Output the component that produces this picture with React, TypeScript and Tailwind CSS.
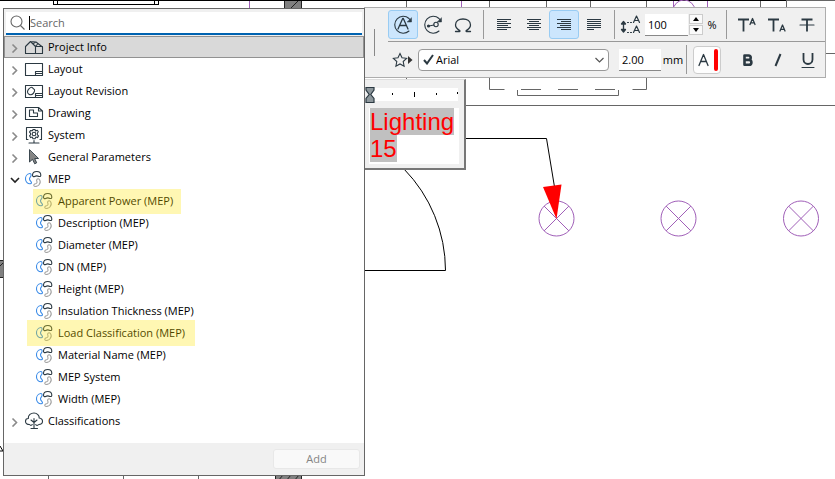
import React from "react";

const INK = "#2b3942";

type IconProps = { className?: string };

function Svg({ w, h, children, className = "" }: { w: number; h: number; children: React.ReactNode; className?: string }) {
  return (
    <svg
      width={w}
      height={h}
      viewBox={`0 0 ${w} ${h}`}
      fill="none"
      stroke={INK}
      strokeWidth="1.1"
      strokeLinecap="round"
      strokeLinejoin="round"
      aria-hidden="true"
      className={`shrink-0 ${className}`}
    >
      {children}
    </svg>
  );
}

/* ---------- Tree icons ---------- */

const HouseIcon = () => (
  <Svg w={20} h={18}>
    <path d="M1.5 15.5V8.5L6.500 3.500l5 5v7zM6.500 3.500L12 4l6.500 5v6.500h-7M11.500 8.500h7M8.800 5.700L12 4M11.500 8.500l2.500-3" />
  </Svg>
);
const LayoutIcon = () => (
  <Svg w={20} h={18}>
    <path d="M1.500 3.500h17v12h-17zM11.500 15.500v-4h7M11.500 13.500h7" />
  </Svg>
);
const RevisionIcon = () => (
  <Svg w={20} h={18}>
    <path d="M1.500 3.500h17v12h-17zM11.500 15.500v-4h7M11.500 13.500h7" />
    <path d="M7.500 5.200c1 0 1 1 2 1.500s1.500 1 1 2.500-2 3.500-3.500 3.500-3.500-1-3.500-3 3-4.500 4-4.500z" />
  </Svg>
);
const DrawingIcon = () => (
  <Svg w={20} h={18}>
    <path d="M1.500 3.500h13l4 3.500v8.500h-17zM14.500 3.500V7h4" />
    <path d="M5.500 6h4v3h4v3.500h-8z" />
  </Svg>
);
const SystemIcon = () => (
  <Svg w={20} h={18}>
    <path d="M4 13.500H2.500v-12h15v12H16M5 17h10M10 14.500V17" />
    <circle cx="10" cy="8" r="1.800" />
    <path d="M9 3.500h2l.5 1.500 1.800-.7 1 1.500-1 1.400.1 1.600 1.200 1-1.100 1.800-1.600-.5-.9 1.700H9l-.7-1.700-1.600.5-1.200-1.800 1.200-1.200-.2-1.500-1-1 1-1.500 2 .2z" />
  </Svg>
);
const PointerIcon = () => (
  <Svg w={20} h={18}>
    <path d="M5.500 2v12l3-2.700 2.200 4.500 2-1-2-4.300h3.500z" fill="#858585" strokeWidth="0.900" />
  </Svg>
);
const MepIcon = () => (
  <Svg w={20} h={18}>
    <path
      d="M5.800 3.500C3 3.800 1.300 6.500 1.500 9.300c.2 2.700 2.300 4.700 4.700 4.500 1.300-.1 1.700-1.200.8-2.100C6 10.700 5.300 9.800 5.500 8.500c.2-1.200 1.500-1.800 1.600-3.200.1-1.100-.4-1.900-1.300-1.800z"
      stroke="#3a8be8"
    />
    <path d="M8.500 5.300C8.500 3 10.300 1.500 12.800 1.500s4 1.600 4 3.800c0 1.200-.9 1.500-1.900 1.100-1.400-.7-2.900-.7-4.300 0-1 .5-2.100.1-2.100-1.100z" />
    <path
      d="M13.300 9c-1 .7-.9 1.600-.4 2.500.5 1.200-.3 2-1.400 2.300-1.400.3-2 1-1.600 1.900.6 1.200 3.600.9 5-.7 1.300-1.500 1.600-3.800.7-5.200-.6-.9-1.500-1.300-2.300-.8z"
      stroke="#a3a3a3"
    />
  </Svg>
);
const TreeIcon = () => (
  <Svg w={20} h={18}>
    <path d="M5.500 12.500c-2.200 0-4-1-4-3.200C1.500 7.500 3 6.500 4.300 6.500 4 3 7 1 10 1s5.500 2.500 5.200 5c2 .3 3.300 1.500 3.300 3.300 0 2-1.600 3.200-3.700 3.200-.8.900-2.300.9-3.100.2M5.500 12.500c.8.900 2 .9 2.800.2" />
    <path d="M10 16V6.500M7 8l3 2.500M13 8l-3 2.500M7 16.500h6.500" />
  </Svg>
);

/* ---------- Tree ---------- */

function Chevron({ open }: { open?: boolean }) {
  return (
    <svg width="10" height="10" viewBox="0 0 10 10" fill="none" strokeWidth="1.600" aria-hidden="true" className="mt-0.5 shrink-0">
      {open ? <path d="M1 3l4 4 4-4" stroke="#222" /> : <path d="M2.500 1.500L6.500 5.500l-4 4" stroke="#8a8a8a" />}
    </svg>
  );
}

const groups: { label: string; Icon: React.FC; open?: boolean; selected?: boolean; items?: { label: string; marked?: "inner" | "outer" }[] }[] = [
  { label: "Project Info", Icon: HouseIcon, selected: true },
  { label: "Layout", Icon: LayoutIcon },
  { label: "Layout Revision", Icon: RevisionIcon },
  { label: "Drawing", Icon: DrawingIcon },
  { label: "System", Icon: SystemIcon },
  { label: "General Parameters", Icon: PointerIcon },
  {
    label: "MEP",
    Icon: MepIcon,
    open: true,
    items: [
      { label: "Apparent Power (MEP)", marked: "inner" },
      { label: "Description (MEP)" },
      { label: "Diameter (MEP)" },
      { label: "DN (MEP)" },
      { label: "Height (MEP)" },
      { label: "Insulation Thickness (MEP)" },
      { label: "Load Classification (MEP)", marked: "outer" },
      { label: "Material Name (MEP)" },
      { label: "MEP System" },
      { label: "Width (MEP)" },
    ],
  },
  { label: "Classifications", Icon: TreeIcon },
];

function ParameterPicker() {
  return (
    <section className="absolute left-[3px] top-2 flex w-[362px] flex-col border border-[#666] bg-[#f0f0f0]">
      <div className="mx-0.5 mt-[3px] flex h-[23px] items-center gap-1 border-b-2 border-[#0063b1] bg-white pl-1">
        <svg width="15" height="16" viewBox="0 0 15 16" fill="none" stroke="#666" strokeWidth="1.100" aria-hidden="true">
          <circle cx="6.500" cy="6.500" r="5.500" />
          <path d="M10.500 10.500l4 4" />
        </svg>
        <span className="flex flex-1 items-center">
          <span className="h-3.5 w-px bg-black" />
          <input type="text" aria-label="Search" placeholder="Search" className="min-w-0 flex-1 bg-transparent outline-none placeholder:text-[#666]" />
        </span>
      </div>
      <ul role="tree" className="mt-px bg-white pb-[11px]">
        {groups.map(({ label, Icon, open, selected, items }) => (
          <li key={label} role="treeitem" aria-expanded={!!open} aria-selected={!!selected}>
            <div className={`flex h-[22px] items-center gap-1 ${selected ? "border border-[#929292] bg-[#d9d9d9] pl-[5px]" : "pl-1.5"}`}>
              <Chevron open={open} />
              <span className="flex items-center gap-1">
                <Icon />
                <span>{label}</span>
              </span>
            </div>
            {items && (
              <ul role="group">
                {items.map((item) => (
                  <li key={item.label} role="treeitem" className="flex h-[22px] items-center pl-[31px]">
                    <span className="relative flex h-[22px] items-center gap-[3px]">
                      <MepIcon />
                      <span>{item.label}</span>
                      {item.marked === "inner" && <span className="absolute -bottom-0.5 -left-0.5 -right-2 -top-px bg-[#ffe503]/30" />}
                      {item.marked === "outer" && <span className="absolute -bottom-0.5 -left-2 -right-2.5 -top-0.5 bg-[#ffe503]/30" />}
                    </span>
                  </li>
                ))}
              </ul>
            )}
          </li>
        ))}
      </ul>
      <footer className="flex h-8 items-center justify-end pr-1">
        <button type="button" disabled className="h-5 w-[87px] rounded-[3px] border border-[#e8e8e8] bg-[#f9f9f9] text-[#858585]">
          Add
        </button>
      </footer>
    </section>
  );
}

/* ---------- Text toolbar ---------- */

function ToolButton({ label, active, children }: { label: string; active?: boolean; children: React.ReactNode }) {
  return (
    <button
      type="button"
      aria-label={label}
      aria-pressed={!!active}
      className={`flex h-[29px] w-[30px] shrink-0 items-center justify-center rounded-[3px] border ${
        active ? "border-[#99ccf3] bg-[#cce6fd]" : "border-transparent"
      }`}
    >
      {children}
    </button>
  );
}

const Divider = ({ className = "" }: IconProps) => <span className={`h-[29px] w-px shrink-0 bg-[#999] ${className}`} />;

function AlignIcon({ lines }: { lines: number[][] }) {
  return (
    <svg width="14" height="13" viewBox="0 0 14 13" fill={INK} aria-hidden="true">
      {lines.map(([x, w], i) => (
        <rect key={i} x={x} y={1 + i * 2} width={w} height="1" />
      ))}
    </svg>
  );
}

const left = [[0, 14], [0, 10], [0, 14], [0, 11], [0, 14], [0, 10]];
const center = [[0, 14], [2, 10], [0, 14], [2, 10], [0, 14], [2, 10]];
const right = [[0, 14], [4, 10], [0, 14], [3, 11], [0, 14], [4, 10]];
const justify = [[0, 14], [0, 14], [0, 14], [0, 14], [0, 14], [0, 7]];

function TextToolbar() {
  return (
    <section className="absolute left-[364px] top-[7px] flex w-[462px] items-center border border-[#adadad] bg-[#f0f0f0]">
      <span className="ml-[9px] mr-[13px] h-[27px] w-px bg-[#888]" />
      <div className="min-w-0 flex-1">
        <div className="flex h-[34px] items-center border-b border-[#999]">
          <ToolButton label="Autotext" active>
            <Svg w={22} h={22}>
              <path d="M17 4.500A8.500 8.500 0 1 0 17 17M17 4.500l1.500 2" />
              <path d="M19.500 4v4h-4z" fill={INK} strokeWidth="0.500" />
              <path d="M6 15l4.700-10.500h.6L16 15M7.700 11.500h6.600" strokeWidth="1.300" />
            </Svg>
          </ToolButton>
          <ToolButton label="Reference">
            <Svg w={22} h={22}>
              <path d="M17 4.500A8.500 8.500 0 1 0 17 17M17 4.500l1.500 2" />
              <path d="M19.500 4v4h-4z" fill={INK} strokeWidth="0.500" />
              <path d="M7 12l5-1" />
              <circle cx="14" cy="10.500" r="2.200" />
              <circle cx="6.500" cy="12" r="1" fill={INK} />
            </Svg>
          </ToolButton>
          <ToolButton label="Insert symbol">
            <Svg w={18} h={18}>
              <path d="M1.500 15.500h4c.5 0 .6-.6.2-.9C3 12.900 1.500 11 1.500 9c0-3.700 3.200-6 7.500-6s7.500 2.300 7.500 6c0 2-1.500 3.900-4.200 5.600-.4.300-.3.900.2.900h4" strokeWidth="1.300" />
            </Svg>
          </ToolButton>
          <Divider className="mx-[5px]" />
          <ToolButton label="Align left"><AlignIcon lines={left} /></ToolButton>
          <ToolButton label="Align center"><AlignIcon lines={center} /></ToolButton>
          <ToolButton label="Align right" active><AlignIcon lines={right} /></ToolButton>
          <ToolButton label="Justify"><AlignIcon lines={justify} /></ToolButton>
          <Divider className="mx-[5px]" />
          <Svg w={22} h={22}>
            <path d="M3.500 8v9M1.500 10l2-2.500 2 2.500zM1.500 15.500l2 2.500 2-2.500z" fill={INK} strokeWidth="1.300" />
            <path d="M7.500 8.500h4.500M7.500 18.500h4.500" strokeDasharray="1 2" />
            <path d="M13.500 8.500l3-6.500 3 6.500M14.500 6.500h4M13.500 18.500l3-6.500 3 6.500M14.500 16.500h4" strokeWidth="1.200" />
          </Svg>
          <span className="ml-[3px] flex items-center gap-px">
            <input aria-label="Line spacing" defaultValue="100" className="h-[22px] w-[43px] border-b border-[#888] bg-white pl-[3px] outline-none" />
            <span className="flex flex-col gap-px">
              <button type="button" aria-label="Increase" className="flex h-[10px] w-[14px] items-center justify-center border border-[#ccc] bg-[#fafafa]">
                <svg width="6" height="4" viewBox="0 0 6 4"><path d="M0 4l3-4 3 4z" /></svg>
              </button>
              <button type="button" aria-label="Decrease" className="flex h-[10px] w-[14px] items-center justify-center border border-[#ccc] bg-[#fafafa]">
                <svg width="6" height="4" viewBox="0 0 6 4"><path d="M0 0l3 4 3-4z" /></svg>
              </button>
            </span>
          </span>
          <span className="w-[18px] text-center">%</span>
          <Divider className="mx-[5px]" />
          <ToolButton label="Superscript">
            <Svg w={20} h={18}>
              <path d="M1 3.500h11M6.500 3.500v12" strokeWidth="1.800" strokeLinecap="butt" />
              <path d="M13 8.500l2.500-6 2.500 6M13.800 6.800h3.400" strokeWidth="1.300" />
            </Svg>
          </ToolButton>
          <ToolButton label="Subscript">
            <Svg w={20} h={18}>
              <path d="M1 3.500h11M6.500 3.500v12" strokeWidth="1.800" strokeLinecap="butt" />
              <path d="M13 15l2.500-6 2.500 6M13.800 13.300h3.400" strokeWidth="1.300" />
            </Svg>
          </ToolButton>
          <ToolButton label="Strikethrough">
            <Svg w={16} h={18}>
              <path d="M2.500 3.500h11M8 3.500v12" strokeWidth="1.800" strokeLinecap="butt" />
              <path d="M1 9h14" />
            </Svg>
          </ToolButton>
        </div>

        <div className="flex h-[35px] items-center">
          <button type="button" aria-label="Favorites" className="flex h-[29px] w-[30px] shrink-0 items-center pl-1">
            <Svg w={16} h={16}>
              <path d="M8 1.500l2 4.300 4.600.5-3.400 3.200.9 4.700L8 11.900l-4.100 2.300.9-4.700L1.400 6.300 6 5.800z" strokeLinejoin="miter" />
            </Svg>
            <svg width="5" height="8" viewBox="0 0 5 8" aria-hidden="true"><path d="M0 0l4.500 4L0 8z" fill="#333" /></svg>
          </button>
          <span className="relative flex h-[22px] w-[191px] shrink-0 items-center">
            <select aria-label="Font" className="h-full w-full appearance-none rounded-sm border border-[#999] bg-white pl-[17px] outline-none">
              <option>Arial</option>
            </select>
            <svg width="11" height="11" viewBox="0 0 11 11" fill="none" stroke={INK} strokeWidth="2" aria-hidden="true" className="pointer-events-none absolute left-[5px]">
              <path d="M1 6l3 3.500L10 1" />
            </svg>
            <svg width="9" height="6" viewBox="0 0 9 6" fill="none" stroke="#555" strokeWidth="1.200" aria-hidden="true" className="pointer-events-none absolute right-[5px]">
              <path d="M.5 1l4 4 4-4" />
            </svg>
          </span>
          <input aria-label="Text height" defaultValue="2.00" className="ml-[10px] h-[22px] w-[42px] border-b border-[#888] bg-white pl-[3px] outline-none" />
          <span className="w-6 text-center">mm</span>
          <Divider className="ml-px mr-[6px]" />
          <button type="button" aria-label="Text color" className="flex h-7 w-7 shrink-0 items-center justify-center gap-1 rounded border border-[#ccc] bg-[#fdfdfd]">
            <Svg w={13} h={14}>
              <path d="M2 12.500L6.500 1.500 11 12.500M3.700 8.500h5.600" strokeWidth="1.300" />
            </Svg>
            <span className="h-[22px] w-1 rounded-sm bg-[#f00]" />
          </button>
          <span className="w-3 shrink-0" />
          <ToolButton label="Bold">
            <Svg w={14} h={16}>
              <path d="M3.500 3.500h4a2.200 2.200 0 0 1 0 4.400h-4zM3.500 8H8a2.300 2.300 0 0 1 0 4.800H3.500z" strokeWidth="2.600" />
            </Svg>
          </ToolButton>
          <ToolButton label="Italic">
            <Svg w={14} h={16}>
              <path d="M4.500 14l5-12" strokeWidth="2" strokeLinecap="butt" />
            </Svg>
          </ToolButton>
          <ToolButton label="Underline">
            <Svg w={14} h={16}>
              <path d="M2.500 1v6.500a4.500 4.500 0 0 0 9 0V1" strokeWidth="1.800" strokeLinecap="butt" />
              <path d="M1 15.500h12" />
            </Svg>
          </ToolButton>
        </div>
      </div>
    </section>
  );
}

/* ---------- In-place text editor ---------- */

function TextEditor() {
  return (
    <section className="absolute left-[364px] top-[79px] w-[102px] border-b-2 border-r-2 border-t border-[#777] border-t-[#ddd] bg-[#f0f0f0] pb-1 pl-[5px] pr-[5px] pt-[7px]">
      <svg width="93" height="17" viewBox="0 0 93 17" aria-hidden="true" className="-ml-1 block">
        <rect x="5" y="1" width="88" height="13" fill="#fff" />
        <path d="M27.500 6v2M49.500 5v5M71.500 6v2M92.500 5v2" stroke="#000" />
        <path d="M1 .5h8v2.500L5.800 7.500 9 11.500v4H1v-4L4.200 7.500 1 3z" fill="#8d979c" stroke={INK} strokeWidth="1.200" />
      </svg>
      <div
        role="textbox"
        aria-label="Label text"
        aria-multiline="true"
        contentEditable
        suppressContentEditableWarning
        className="mt-1 h-14 whitespace-nowrap bg-white pl-px font-['Liberation_Sans',Arial,sans-serif] text-2xl leading-[27px] text-[#f00] outline-none"
      >
        <span className="block w-fit bg-[#c0c0c0]">Lighting</span>
        <span className="block w-fit bg-[#c0c0c0]">15</span>
      </div>
    </section>
  );
}

/* ---------- Floor plan behind the palettes ---------- */

function Lamp({ x, y }: { x: number; y: number }) {
  return (
    <g stroke="#a05fb8" fill="none">
      <circle cx={x} cy={y} r="17.500" />
      <path d={`M${x - 12.4} ${y - 12.4}l24.800 24.800M${x + 12.4} ${y - 12.4}l-24.800 24.800`} />
    </g>
  );
}

function FloorPlan() {
  return (
    <svg width="835" height="479" viewBox="0 0 835 479" fill="none" aria-hidden="true" className="absolute left-0 top-0">
      <g stroke="#000">
        <path d="M0 .5h786" />
        <path d="M53.500 1v4M57.500 1v3M154.500 1v3M158.500 1v4M53 4.500h106" />
        <path d="M466 138.500h80.500L555 190M365 270.500h80.500A146 146 0 0 0 404 169" />
        <path d="M0 446l3 5H0" />
      </g>
      <g fill="#808080" stroke="#222">
        <path d="M284.500 1v8h17V1M290 9l8-8M-1 260.500h5v17h-5M0 266l4-4" />
        <path d="M275.500 475h26v6h-26zM278 481l5-6M286 481l5-6M294 481l5-6" />
      </g>
      <g stroke="#666">
        <path d="M786 .5h49M406.500 1v78M489.500 1v88.500h15M546.500 1v8M590.500 1v8M646.500 1v88.500h-14M760.500 1v8M786.500 1v8" />
        <path d="M517.500 90v5.500h101V90M521 89.500h20M558 89.500h20M595 89.500h20" />
        <path d="M826 53.500h9M466 105.500h369M48.500 476v3M123.500 476v3M198.500 476v3" />
      </g>
      <g stroke="#a05fb8">
        <path d="M249.500 1v8M461.500 1v8M673.500 1v8M707.500 1v8" />
        <circle cx="684" cy="11" r="11" />
      </g>
      <Lamp x={556.5} y={218.5} />
      <Lamp x={678.5} y={218.5} />
      <Lamp x={801} y={218.5} />
      <path d="M543 187l18.500-2.500L556.500 219z" fill="#f00" />
    </svg>
  );
}

export default function App() {
  return (
    <main className="relative h-screen min-h-[479px] overflow-hidden bg-white font-['Open_Sans','Noto_Sans',sans-serif] text-[11px] leading-4 text-black">
      <FloorPlan />
      <TextToolbar />
      <TextEditor />
      <ParameterPicker />
    </main>
  );
}
